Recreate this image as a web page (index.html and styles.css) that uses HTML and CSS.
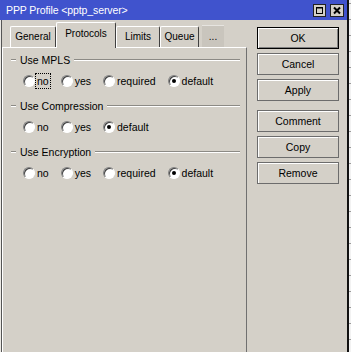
FILE: index.html
```html
<!DOCTYPE html>
<html lang="en">
<head>
    <meta charset="UTF-8">
    <title>PPP Profile</title>
    <link rel="stylesheet" href="styles.css">
</head>
<body>
    <div class="screen">
        <div class="window">
            <div class="titlebar">
                <span class="title">PPP Profile &lt;pptp_server&gt;</span>
                <div class="title-btns">
                    <span class="tbtn tbtn-max">
                        <svg width="11" height="11" viewBox="0 0 11 11"><rect x="2.5" y="2.5" width="6" height="6" fill="none" stroke="#000" stroke-width="1"/><line x1="2" y1="3" x2="9" y2="3" stroke="#000" stroke-width="1"/></svg>
                    </span>
                    <span class="tbtn tbtn-close">
                        <svg width="12" height="11" viewBox="0 0 12 11"><path d="M3 2.5 L9 8.5 M9 2.5 L3 8.5" stroke="#000" stroke-width="2" fill="none"/></svg>
                    </span>
                </div>
            </div>
            <div class="client">
                <div class="main">
                    <div class="tabs">
                        <div class="tab tab-general">General</div>
                        <div class="tab tab-protocols active">Protocols</div>
                        <div class="tab tab-limits">Limits</div>
                        <div class="tab tab-queue">Queue</div>
                        <div class="tab tab-more">...</div>
                    </div>
                    <div class="panel">
                        <div class="group">
                            <div class="legend"><span class="dash"></span><span class="legend-text">Use MPLS</span><span class="rule"></span></div>
                            <div class="options">
                                <label class="opt"><span class="radio"></span><span class="opt-text focus">no</span></label>
                                <label class="opt"><span class="radio"></span><span class="opt-text">yes</span></label>
                                <label class="opt"><span class="radio"></span><span class="opt-text">required</span></label>
                                <label class="opt"><span class="radio checked"></span><span class="opt-text">default</span></label>
                            </div>
                        </div>
                        <div class="group">
                            <div class="legend"><span class="dash"></span><span class="legend-text">Use Compression</span><span class="rule"></span></div>
                            <div class="options">
                                <label class="opt"><span class="radio"></span><span class="opt-text">no</span></label>
                                <label class="opt"><span class="radio"></span><span class="opt-text">yes</span></label>
                                <label class="opt"><span class="radio checked"></span><span class="opt-text">default</span></label>
                            </div>
                        </div>
                        <div class="group">
                            <div class="legend"><span class="dash"></span><span class="legend-text">Use Encryption</span><span class="rule"></span></div>
                            <div class="options">
                                <label class="opt"><span class="radio"></span><span class="opt-text">no</span></label>
                                <label class="opt"><span class="radio"></span><span class="opt-text">yes</span></label>
                                <label class="opt"><span class="radio"></span><span class="opt-text">required</span></label>
                                <label class="opt"><span class="radio checked"></span><span class="opt-text">default</span></label>
                            </div>
                        </div>
                    </div>
                </div>
                <div class="side">
                    <button class="btn btn-default">OK</button>
                    <button class="btn">Cancel</button>
                    <button class="btn">Apply</button>
                    <button class="btn btn-sep">Comment</button>
                    <button class="btn">Copy</button>
                    <button class="btn">Remove</button>
                </div>
            </div>
        </div>
        <div class="strip"></div>
    </div>
</body>
</html>
```

FILE: styles.css
```css
body {
    margin: 0;
    padding: 0;
    background-color: #d4d0c8;
    font-family: "Liberation Sans", Arial, sans-serif;
    font-size: 10px;
    color: #000;
    overflow: hidden;
}
.screen {
    display: flex;
    width: 351px;
    height: 352px;
}
.window {
    width: 347px;
    height: 352px;
    border-right: 2px solid #111;
    display: flex;
    flex-direction: column;
    background-color: #d4d0c8;
}
.strip {
    flex: 1;
    background: repeating-linear-gradient(to bottom, #f2f2f2 0, #f2f2f2 3px, #9a9a9a 3px, #9a9a9a 4px, #f2f2f2 4px, #f2f2f2 16px);
}
.titlebar {
    height: 20px;
    background-color: #4053cd;
    display: flex;
    align-items: center;
    justify-content: space-between;
    padding-left: 6px;
    padding-right: 3px;
}
.title {
    color: #fff;
    font-size: 10.5px;
    letter-spacing: -0.1px;
}
.title-btns {
    display: flex;
    gap: 4px;
}
.tbtn {
    width: 11px;
    height: 11px;
    background-color: #d4d0c8;
    border: 1px solid #222;
    display: flex;
    align-items: center;
    justify-content: center;
}
.tbtn-close {
    width: 12px;
}
.client {
    flex: 1;
    display: flex;
}
.main {
    width: 245px;
    padding-left: 2px;
    display: flex;
    flex-direction: column;
    box-shadow: inset 1px 0 #ebe9e4, inset 2px 0 #555;
}
.tabs {
    display: flex;
    align-items: flex-end;
    height: 25px;
    margin-top: 2px;
    padding-left: 8px;
}
.tab {
    height: 21px;
    box-sizing: border-box;
    border-top: 1px solid #fff;
    border-left: 1px solid #fff;
    border-right: 1px solid #404040;
    border-radius: 2px 2px 0 0;
    display: flex;
    align-items: center;
    justify-content: center;
    padding-bottom: 1px;
}
.tab-general { width: 46px; }
.tab-protocols { width: 60px; }
.tab-limits { width: 44px; }
.tab-queue { width: 39px; }
.tab-more {
    width: 22px;
    height: 22px;
    margin-left: 3px;
    background-color: #c9c5bd;
    border-right: none;
    border-left: none;
    border-top: 1px solid #e6e4e0;
    border-radius: 0;
}
.tab.active {
    height: 26px;
    margin-bottom: -1px;
    position: relative;
    z-index: 1;
    background-color: #d4d0c8;
    padding-bottom: 4px;
}
.panel {
    flex: 1;
    border-top: 1px solid #fff;
    border-left: 1px solid #fff;
    border-right: 1px solid #707070;
    padding-top: 6px;
}
.group {
    margin-bottom: 12px;
}
.legend {
    display: flex;
    align-items: center;
    height: 12px;
    margin-left: 8px;
    margin-right: 6px;
}
.dash,
.rule {
    height: 0;
    border-top: 1px solid #8c8a85;
    border-bottom: 1px solid #fff;
}
.dash {
    width: 5px;
}
.rule {
    flex: 1;
}
.legend-text {
    padding: 0 4px;
    font-size: 10.5px;
}
.options {
    display: flex;
    align-items: center;
    gap: 12px;
    height: 14px;
    margin-top: 8px;
    margin-left: 20px;
}
.opt {
    display: flex;
    align-items: center;
    gap: 2px;
}
.opt-text {
    font-size: 10.5px;
}
.focus {
    outline: 1px dotted #000;
    outline-offset: 1px;
}
.radio {
    width: 12px;
    height: 12px;
    box-sizing: border-box;
    border-radius: 50%;
    border: 1px solid;
    border-color: #808080 #fff #fff #808080;
    background-color: #fff;
    box-shadow: inset 1px 1px 0 #404040;
    position: relative;
}
.radio.checked::after {
    content: "";
    position: absolute;
    left: 3px;
    top: 3px;
    width: 4px;
    height: 4px;
    border-radius: 50%;
    background-color: #000;
}
.side {
    display: flex;
    flex-direction: column;
    gap: 4px;
    padding-top: 7px;
    margin-left: 10px;
}
.btn {
    width: 82px;
    height: 22px;
    box-sizing: border-box;
    background-color: #d4d0c8;
    border: 1px solid #6c6c6c;
    box-shadow: inset 1px 1px 0 #fff;
    font-family: "Liberation Sans", Arial, sans-serif;
    font-size: 10.5px;
    color: #000;
    padding: 0;
}
.btn-default {
    border: 1px solid #000;
    box-shadow: inset 1px 1px 0 #fff, inset -1px -1px 0 #808080;
}
.btn-sep {
    margin-top: 5px;
}
```
